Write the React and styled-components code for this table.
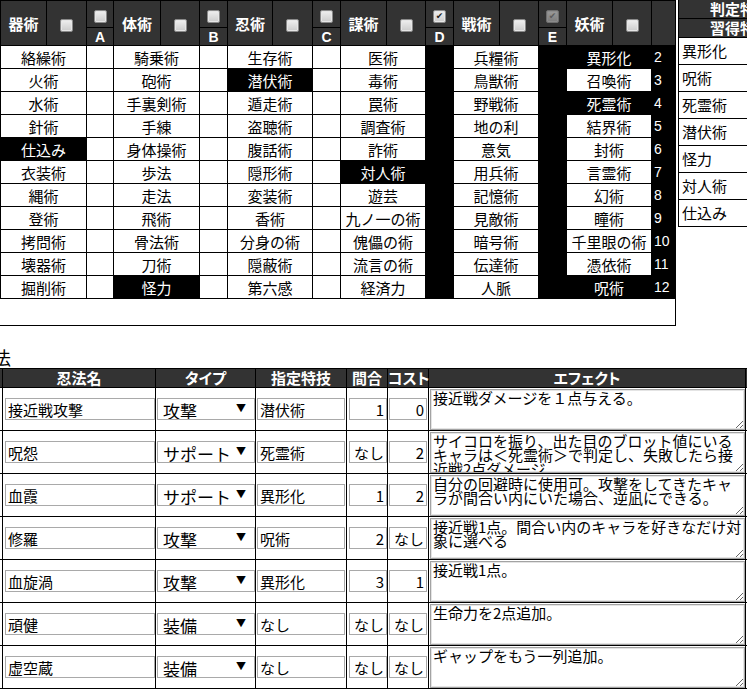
import React from "react";
import styled, { createGlobalStyle } from "styled-components";

const GlobalStyle = createGlobalStyle`
  html, body {
    margin: 0;
    padding: 0;
    background: #fff;
  }
  body {
    font-family: "Noto Sans CJK JP", "Liberation Sans", sans-serif;
    color: #000;
    overflow: hidden;
  }
`;

const Page = styled.div`
  width: 747px;
  height: 689px;
  overflow: hidden;
`;

const TopArea = styled.div`
  display: flex;
  align-items: flex-start;
  gap: 1px;
`;

const SkillPanel = styled.div`
  flex: none;
  width: 675px;
  height: 325px;
  border-right: 1px solid #000;
  border-bottom: 1px solid #000;
`;

const SkillTable = styled.table`
  border-collapse: collapse;
  table-layout: fixed;
  width: 675px;

  th, td {
    border: 1px solid #000;
    padding: 0;
  }
`;

const HeadName = styled.th`
  height: 26px;
  background: #333;
  color: #fff;
  font-size: 15px;
  font-weight: bold;
  line-height: 1;
`;

const HeadCell = styled.th`
  height: ${p => (p.$short ? "26px" : "auto")};
  background: #333;
  text-align: center;
  vertical-align: middle;
`;

const LetterCell = styled.th`
  height: 17px;
  background: #333;
  color: #fff;
  font-family: "Liberation Sans", sans-serif;
  font-size: 14px;
  font-weight: bold;
  line-height: 1;
`;

const Check = styled.span`
  display: inline-block;
  box-sizing: border-box;
  width: 13px;
  height: 13px;
  border: 1px solid ${p => (p.$disabled ? "#6e6e6e" : "#8a8a8a")};
  border-radius: 2px;
  background: ${p =>
    p.$disabled
      ? "linear-gradient(#9a9a9a, #7c7c7c)"
      : "linear-gradient(#f0f0f0, #cbcbcb)"};
  box-shadow: inset 0 0 0 1px ${p => (p.$disabled ? "#8c8c8c" : "#e6e6e6")};
  color: ${p => (p.$disabled ? "#5c5c5c" : "#222")};
  font-family: "DejaVu Sans", sans-serif;
  font-size: 9px;
  line-height: 11px;
  text-align: center;
  vertical-align: middle;
`;

const SkillCell = styled.td`
  height: 22px;
  background: ${p => (p.$on ? "#000" : "#fff")};
  color: ${p => (p.$on ? "#fff" : "#000")};
  font-size: 15px;
  line-height: 1;
  text-align: center;
  white-space: nowrap;
`;

const GapCell = styled.td`
  background: ${p => (p.$dark ? "#000" : "#fff")};
`;

const NumCell = styled.td`
  background: #000;
  color: #fff;
  font-family: "Liberation Sans", sans-serif;
  font-size: 14px;
  line-height: 1;
  text-align: left;
  padding-left: 2px !important;
`;

const JudgePanel = styled.div`
  flex: none;
  margin-left: 1px;
  width: 122px;
  border-left: 1px solid #000;
`;

const JudgeHead = styled.div`
  height: 18px;
  border-bottom: 1px solid #000;
  background: #333;
  color: #fff;
  font-size: 15px;
  font-weight: bold;
  line-height: 18px;
  text-align: center;
  white-space: nowrap;
`;

const JudgeItem = styled.div`
  height: 26px;
  border-bottom: 1px solid #000;
  padding-left: 3px;
  font-size: 15px;
  line-height: 26px;
`;

const SectionTitle = styled.h2`
  margin: 20px 0 0 -25px;
  font-size: 18px;
  font-weight: normal;
  line-height: 22px;
`;

const ArtTable = styled.table`
  border-collapse: collapse;
  table-layout: fixed;
  width: 800px;
  margin-left: -10px;

  th, td {
    border: 1px solid #000;
    padding: 0;
  }
`;

const ArtHead = styled.th`
  height: 18px;
  background: #333;
  color: #fff;
  font-size: 15px;
  font-weight: bold;
  line-height: 18px;
  white-space: nowrap;
  font-feature-settings: "palt";
`;

const ArtCell = styled.td`
  height: 42px;
  vertical-align: middle;
  padding: 0 0 0 ${p => p.$pad || 1}px !important;
`;

const Field = styled.input`
  display: block;
  box-sizing: border-box;
  width: ${p => p.$w}px;
  height: 22px;
  margin: 0;
  padding: 0 2px;
  border: 1px solid #a9a9a9;
  background: #fff;
  font-family: inherit;
  font-size: 15px;
  color: #000;
  text-align: ${p => (p.$right ? "right" : "left")};
  outline: none;
`;

const SelectWrap = styled.div`
  position: relative;
  width: 98px;

  &::after {
    content: "▼";
    position: absolute;
    right: 9px;
    top: 5px;
    font-size: 10px;
    line-height: 10px;
    color: #000;
    pointer-events: none;
  }
`;

const TypeSelect = styled.select`
  display: block;
  box-sizing: border-box;
  width: 98px;
  height: 22px;
  margin: 0;
  padding: 2px 0 0 5px;
  border: 1px solid #a9a9a9;
  border-radius: 0;
  background: #fff;
  appearance: none;
  font-family: inherit;
  font-size: 17px;
  line-height: 1;
  color: #000;
`;

const Effect = styled.textarea`
  display: block;
  box-sizing: border-box;
  width: 315px;
  height: 41px;
  margin: 0;
  padding: 1px 2px;
  border: 1px solid #a3a3a3;
  box-shadow: inset 0 0 0 1px #e4e4e4;
  overflow: hidden;
  font-family: inherit;
  font-size: 15px;
  line-height: 14px;
  color: #000;
`;

const learned = ["異形化", "呪術", "死霊術", "潜伏術", "怪力", "対人術", "仕込み"];

const groups = [
  {
    name: "器術",
    letter: "A",
    skills: ["絡繰術", "火術", "水術", "針術", "仕込み", "衣装術", "縄術", "登術", "拷問術", "壊器術", "掘削術"],
  },
  {
    name: "体術",
    letter: "B",
    skills: ["騎乗術", "砲術", "手裏剣術", "手練", "身体操術", "歩法", "走法", "飛術", "骨法術", "刀術", "怪力"],
  },
  {
    name: "忍術",
    letter: "C",
    skills: ["生存術", "潜伏術", "遁走術", "盗聴術", "腹話術", "隠形術", "変装術", "香術", "分身の術", "隠蔽術", "第六感"],
  },
  {
    name: "謀術",
    letter: "D",
    checked: true,
    skills: ["医術", "毒術", "罠術", "調査術", "詐術", "対人術", "遊芸", "九ノ一の術", "傀儡の術", "流言の術", "経済力"],
  },
  {
    name: "戦術",
    letter: "E",
    checked: true,
    disabled: true,
    skills: ["兵糧術", "鳥獣術", "野戦術", "地の利", "意気", "用兵術", "記憶術", "見敵術", "暗号術", "伝達術", "人脈"],
  },
  {
    name: "妖術",
    letter: null,
    skills: ["異形化", "召喚術", "死霊術", "結界術", "封術", "言霊術", "幻術", "瞳術", "千里眼の術", "憑依術", "呪術"],
  },
];

const colWidths = [46, 40, 27, 47, 39, 28, 45, 40, 28, 46, 39, 28, 46, 39, 28, 46, 39, 24];

const arts = [
  { name: "接近戦攻撃", type: "攻撃", skill: "潜伏術", range: "1", cost: "0", effect: "接近戦ダメージを１点与える。" },
  {
    name: "呪怨",
    type: "サポート",
    skill: "死霊術",
    range: "なし",
    cost: "2",
    effect: "サイコロを振り、出た目のブロット値にいるキャラは＜死霊術＞で判定し、失敗したら接近戦2点ダメージ",
  },
  {
    name: "血霞",
    type: "サポート",
    skill: "異形化",
    range: "1",
    cost: "2",
    effect: "自分の回避時に使用可。攻撃をしてきたキャラが間合い内にいた場合、逆凪にできる。",
  },
  { name: "修羅", type: "攻撃", skill: "呪術", range: "2", cost: "なし", effect: "接近戦1点。間合い内のキャラを好きなだけ対象に選べる" },
  { name: "血旋渦", type: "攻撃", skill: "異形化", range: "3", cost: "1", effect: "接近戦1点。" },
  { name: "頑健", type: "装備", skill: "なし", range: "なし", cost: "なし", effect: "生命力を2点追加。" },
  { name: "虚空蔵", type: "装備", skill: "なし", range: "なし", cost: "なし", effect: "ギャップをもう一列追加。" },
];

const types = ["攻撃", "サポート", "装備"];

const SkillGrid = () => (
  <SkillTable>
    <colgroup>
      {colWidths.map((w, i) => (
        <col key={i} style={{ width: w }} />
      ))}
    </colgroup>
    <thead>
      <tr>
        {groups.map(g => (
          <React.Fragment key={g.name}>
            <HeadName rowSpan={2}>{g.name}</HeadName>
            <HeadCell rowSpan={2}>
              <Check />
            </HeadCell>
            {g.letter ? (
              <HeadCell $short>
                <Check $disabled={g.disabled}>{g.checked ? "✔" : ""}</Check>
              </HeadCell>
            ) : (
              <HeadCell rowSpan={2} />
            )}
          </React.Fragment>
        ))}
      </tr>
      <tr>
        {groups
          .filter(g => g.letter)
          .map(g => (
            <LetterCell key={g.letter}>{g.letter}</LetterCell>
          ))}
      </tr>
    </thead>
    <tbody>
      {groups[0].skills.map((_, row) => (
        <tr key={row}>
          {groups.map(g => (
            <React.Fragment key={g.name}>
              <SkillCell colSpan={2} $on={learned.includes(g.skills[row])}>
                {g.skills[row]}
              </SkillCell>
              {g.letter ? <GapCell $dark={g.checked} /> : <NumCell>{row + 2}</NumCell>}
            </React.Fragment>
          ))}
        </tr>
      ))}
    </tbody>
  </SkillTable>
);

const ArtRow = ({ art }) => (
  <tr>
    <ArtCell />
    <ArtCell $pad={2}>
      <Field $w={150} defaultValue={art.name} />
    </ArtCell>
    <ArtCell>
      <SelectWrap>
        <TypeSelect defaultValue={art.type}>
          {types.map(t => (
            <option key={t}>{t}</option>
          ))}
        </TypeSelect>
      </SelectWrap>
    </ArtCell>
    <ArtCell>
      <Field $w={88} defaultValue={art.skill} />
    </ArtCell>
    <ArtCell $pad={2}>
      <Field $w={38} $right defaultValue={art.range} />
    </ArtCell>
    <ArtCell>
      <Field $w={38} $right defaultValue={art.cost} />
    </ArtCell>
    <ArtCell>
      <Effect defaultValue={art.effect} />
    </ArtCell>
    <ArtCell />
  </tr>
);

export default function App() {
  return (
    <Page>
      <GlobalStyle />
      <TopArea>
        <SkillPanel>
          <SkillGrid />
        </SkillPanel>
        <JudgePanel>
          <JudgeHead>判定特技</JudgeHead>
          <JudgeHead>習得特技</JudgeHead>
          {learned.map(s => (
            <JudgeItem key={s}>{s}</JudgeItem>
          ))}
        </JudgePanel>
      </TopArea>
      <SectionTitle>忍法</SectionTitle>
      <ArtTable>
        <colgroup>
          {[12, 153, 100, 91, 41, 41, 317, 45].map((w, i) => (
            <col key={i} style={{ width: w }} />
          ))}
        </colgroup>
        <thead>
          <tr>
            <ArtHead />
            <ArtHead>忍法名</ArtHead>
            <ArtHead>タイプ</ArtHead>
            <ArtHead>指定特技</ArtHead>
            <ArtHead>間合</ArtHead>
            <ArtHead>コスト</ArtHead>
            <ArtHead>エフェクト</ArtHead>
            <ArtHead />
          </tr>
        </thead>
        <tbody>
          {arts.map(a => (
            <ArtRow key={a.name} art={a} />
          ))}
        </tbody>
      </ArtTable>
    </Page>
  );
}
